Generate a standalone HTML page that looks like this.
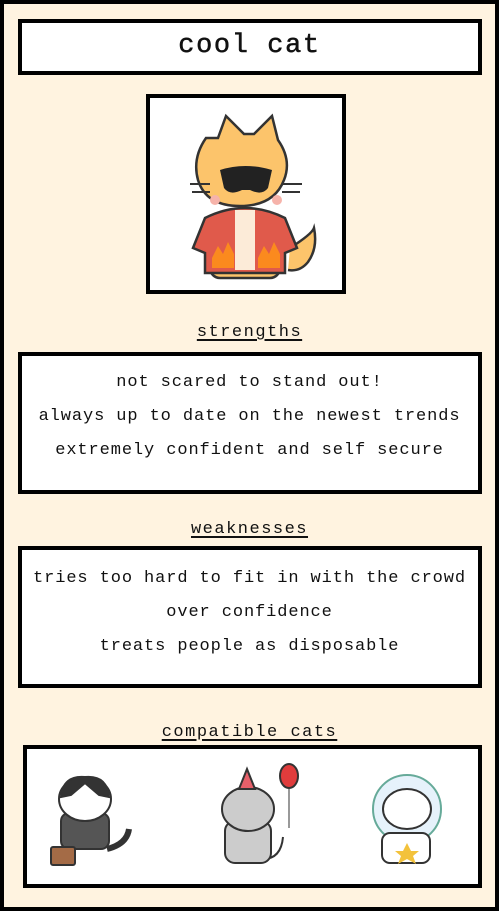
<!DOCTYPE html>
<html><head><style>
*{margin:0;padding:0;box-sizing:border-box}
body{width:499px;height:911px;background:#000;font-family:"Liberation Mono",monospace;overflow:hidden}
#f{position:absolute;left:4px;top:4px;width:491px;height:903px;background:#fff3e0}
.b{position:absolute;background:#fff;border:4px solid #000}
.t{position:absolute;left:0;width:499px;text-align:center;color:#111}
.lab{font-size:17px;letter-spacing:1.5px;text-decoration:underline;text-underline-offset:3px;text-decoration-thickness:2px}
.ln{font-size:17px;letter-spacing:0.9px;line-height:34px}
</style></head><body>
<div id="f"></div>
<div class="b" style="left:18px;top:19px;width:464px;height:56px"></div>
<div class="t" style="top:31px;font-size:27px;letter-spacing:1.6px;-webkit-text-stroke:0.5px #111">cool cat</div>
<div class="b" style="left:146px;top:94px;width:200px;height:200px">
<svg width="192" height="192" viewBox="0 0 192 192">
<g stroke="#333" stroke-width="2.5">
<path d="M140 150 q22 -14 24 -20 q4 20 -6 34 q-8 10 -20 8" fill="#fcc46b"/>
<rect x="60" y="140" width="70" height="40" rx="10" fill="#fcc46b"/>
<path d="M55 120 q40 -20 80 0 l12 30 -12 5 0 20 -80 0 0-20 -12 -5z" fill="#e05a4b"/>
<rect x="85" y="112" width="20" height="60" fill="#fcebd8" stroke="none"/>
<path d="M68 40 l8 -22 18 18 h10 l18 -18 6 24 q14 20 6 40 q-10 26 -44 26 q-34 0 -42 -26 q-6 -22 8 -42z" fill="#fcc46b"/>
</g>
<path d="M62 160 l6 -12 5 8 5 -12 6 12 v14 h-22z M108 160 l6 -12 5 8 5 -12 6 12 v14 h-22z" fill="#fb8a1e"/>
<path d="M70 72 q25 -8 52 0 l-4 18 q-6 8 -18 2 h-8 q-12 6 -18 -2z" fill="#222"/>
<circle cx="65" cy="102" r="5" fill="#f6b3aa"/><circle cx="127" cy="102" r="5" fill="#f6b3aa"/>
<path d="M40 86 h20 M42 94 h18 M132 86 h20 M132 94 h18" stroke="#333" stroke-width="2"/>
</svg></div>
<div class="t lab" style="top:323px">strengths</div>
<div class="b" style="left:18px;top:352px;width:464px;height:142px"></div>
<div class="t ln" style="top:366px">not scared to stand out!<br>always up to date on the newest trends<br>extremely confident and self secure</div>
<div class="t lab" style="top:520px">weaknesses</div>
<div class="b" style="left:18px;top:546px;width:464px;height:142px"></div>
<div class="t ln" style="top:562px">tries too hard to fit in with the crowd<br>over confidence<br>treats people as disposable</div>
<div class="t lab" style="top:723px">compatible cats</div>
<div class="b" style="left:23px;top:745px;width:459px;height:143px">
<svg width="451" height="135" viewBox="0 0 451 135">
<g stroke="#333" stroke-width="2">
<path d="M80 100 q20 -5 22 -20" fill="none" stroke-width="6"/>
<rect x="34" y="64" width="48" height="36" rx="8" fill="#555"/>
<ellipse cx="58" cy="50" rx="26" ry="22" fill="#fff"/>
<path d="M34 48 q2 -22 24 -20 q22 -2 24 20 l-10 -2 -14 -12 -14 12z" fill="#333"/>
<rect x="24" y="98" width="24" height="18" rx="2" fill="#a46b46"/>
<path d="M236 110 q18 0 20 -22" fill="none"/>
<rect x="198" y="72" width="46" height="42" rx="10" fill="#ccc"/>
<ellipse cx="221" cy="60" rx="26" ry="22" fill="#ccc"/>
<path d="M212 40 l8 -20 8 20z" fill="#e6606a"/>
<ellipse cx="262" cy="27" rx="9" ry="12" fill="#e03c3c"/>
<path d="M262 39 v40" fill="none" stroke-width="1"/>
<circle cx="380" cy="60" r="34" fill="#e6f2fb" stroke="#6a9"/>
<rect x="355" y="84" width="48" height="30" rx="8" fill="#fff"/>
<ellipse cx="380" cy="60" rx="24" ry="20" fill="#fff"/>
</g>
<path d="M380 94 l4 8 8 0 -6 5 3 8 -9 -5 -9 5 3 -8 -6 -5 8 0z" fill="#f3c23b"/>
</svg></div>
</body></html>
